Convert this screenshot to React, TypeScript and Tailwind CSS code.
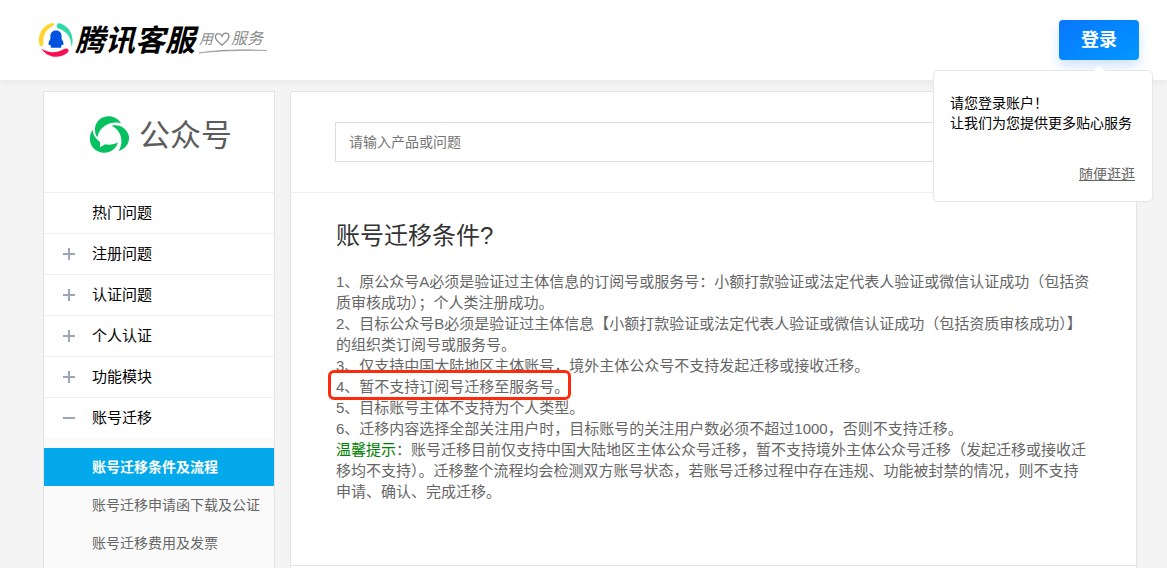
import { useState } from "react";
import clsx from "clsx";

const menu = [
  { label: "热门问题", expandable: false },
  { label: "注册问题", expandable: true },
  { label: "认证问题", expandable: true },
  { label: "个人认证", expandable: true },
  { label: "功能模块", expandable: true },
  { label: "账号迁移", expandable: true },
];

const subMenu = ["账号迁移条件及流程", "账号迁移申请函下载及公证", "账号迁移费用及发票"];

function BrandMark() {
  return (
    <svg viewBox="0 0 36 36" className="h-9 w-9" fill="none">
      <path d="M15.500 1C5.500 2 -1.500 12 1.600 23.500C2.500 24.500 4.500 24 5.500 22.500C4.300 14 8 7.500 14.800 4C16.300 3 16.500 1.500 15.500 1Z" fill="#ffd631" />
      <path d="M19 3.500C19 1.500 20.500 .8 22.500 1.500C32 5 37 15 33.500 25.500C33.500 16 29.500 9.500 20.500 6.500C19 6 18.500 5 19 3.500Z" fill="#2fd9a8" />
      <path d="M3.500 26.500C11 31.500 18 31.500 26 27C28 26 30 26.500 30.500 28C30.800 29 30.300 30 29.500 30.800C21 37.500 8.500 35.500 3.500 26.500Z" fill="#fa0f50" />
      <path d="M18 8.500c-3.800 0-5.600 2.600-5.600 5.800v2.800c-1.300 1.800-2 3.600-1.900 5.200.1 1 .9 1 1.500.1.300.8.600 1.300 1 1.900-.6.500-.6 1.500.4 1.500h9.200c1 0 1-1 .4-1.500.4-.6.700-1.100 1-1.900.6.900 1.400.9 1.500-.1.100-1.600-.6-3.400-1.900-5.200v-2.800c0-3.200-1.800-5.800-5.600-5.800Z" fill="#0053e0" />
    </svg>
  );
}

function Slogan() {
  return (
    <span className="mt-0.5 ml-1 flex flex-col text-[#8c8c8c]">
      <span className="flex items-center text-base leading-5 italic">
        <span className="text-sm leading-5">用</span>
        <svg viewBox="0 0 16 16" className="h-[18px] w-[18px]" fill="none" stroke="currentColor" strokeWidth="1.2">
          <path d="M8 13.500C5.500 11.500 1.500 9 2.200 5.500C2.900 2.500 6.500 2.300 8 5.500C9.500 2 13.500 2 14.200 5C14.800 8.500 10.500 11 8 13.500Z" />
        </svg>
        服务
      </span>
      <svg viewBox="0 0 68 5" className="h-[5px] w-[68px]">
        <path d="M0 4C20 .5 44 .3 68 1.500C44 1 20 1.800 0 4Z" fill="currentColor" stroke="currentColor" strokeWidth=".5" />
      </svg>
    </span>
  );
}

function OfficialAccountMark() {
  return (
    <svg viewBox="0 0 117 111" className="h-[37px] w-[39px]" fill="#07c160">
      <path d="M22 64C10 48 13 23 29 10C47-5 77-3 93 21C66 15 30 25 22 64Z" />
      <path d="M65 29C87 23 110 36 116 58C121 79 107 99 86 105C101 80 97 45 65 29Z" />
      <path d="M8 41C9 56 17 67 30 78L30 94L46 85C62 88 74 84 84 79C79 99 60 112 39 110C13 107-3 86 0 62C1 54 4 47 8 41Z" />
    </svg>
  );
}

function LoginPopover() {
  return (
    <div className="absolute top-[50px] -right-3.5 z-10 w-[220px] rounded-[5px] border border-[#e6e6e6] bg-white px-4 pt-[22px] pb-[17px] text-sm leading-5">
      <svg viewBox="0 0 12 6" className="absolute -top-1.5 left-[159px] h-[7px] w-3" fill="#fff">
        <path d="M0 6L6 0L12 6Z" />
      </svg>
      <p className="whitespace-nowrap">
        请您登录账户！
        <br />
        让我们为您提供更多贴心服务
      </p>
      <div className="mt-[31px] pr-px text-right">
        <a href="#" className="text-[#666] underline">
          随便逛逛
        </a>
      </div>
    </div>
  );
}

function Header() {
  return (
    <header className="relative z-10 flex h-20 items-center justify-between bg-white pr-7 pl-[38px] shadow-[0_2px_8px_rgba(0,0,0,0.06)]">
      <a href="#" className="flex items-center">
        <BrandMark />
        <span className="ml-px pt-0.5 text-3xl leading-9 font-bold italic text-black">腾讯客服</span>
        <Slogan />
      </a>
      <div className="relative">
        <button className="block h-10 w-20 rounded bg-linear-to-br from-[#0a76ff] to-[#0597ff] text-lg font-bold text-white shadow-[0_6px_12px_rgba(20,110,255,0.2)]">
          登录
        </button>
        <LoginPopover />
      </div>
    </header>
  );
}

function Sidebar() {
  const [active, setActive] = useState(subMenu[0]);
  const [open, setOpen] = useState("账号迁移");

  return (
    <aside className="flex w-[232px] shrink-0 flex-col border border-b-0 border-[#e3e3e3] bg-white">
      <div className="flex h-[101px] items-start border-b border-[#f0f0f0] pt-6 pl-[46px]">
        <OfficialAccountMark />
        <span className="ml-2.5 pt-0.5 text-[31px] leading-9 text-[#5c5c5c]">公众号</span>
      </div>
      <nav className="flex flex-1 flex-col">
        {menu.map((item) => (
          <button
            key={item.label}
            onClick={() => setOpen(item.label)}
            className="flex h-[41px] w-full items-center border-b border-[#f0f0f0] pl-[19px] text-left text-[15px] text-black last-of-type:border-[#fafafa]"
          >
            <span className="w-[29px]">
              {item.expandable && (
                <svg viewBox="0 0 12 12" className="h-3 w-3" stroke="#9aa5b8" strokeWidth="2">
                  <path d={open === item.label ? "M0 6H12" : "M0 6H12M6 0V12"} />
                </svg>
              )}
            </span>
            {item.label}
          </button>
        ))}
        {open === "账号迁移" && (
          <ul className="flex-1 bg-[#fafafa] pt-[9px]">
            {subMenu.map((label) => (
              <li key={label}>
                <a
                  href="#"
                  onClick={() => setActive(label)}
                  className={clsx(
                    "block h-[38px] pl-12 text-sm leading-[38px] whitespace-nowrap",
                    active === label ? "bg-[#03a9ea] font-bold text-white" : "text-[#666]"
                  )}
                >
                  {label}
                </a>
              </li>
            ))}
          </ul>
        )}
      </nav>
    </aside>
  );
}

function Article() {
  return (
    <article className="border-b border-[#e8e8e8] px-[45px] pt-[26px] pb-[63px]">
      <h1 className="text-2xl leading-[34px] text-[#333]">账号迁移条件?</h1>
      <div className="mt-[18px] text-[15px] leading-[21px] text-[#666]">
        <p>
          1、原公众号A必须是验证过主体信息的订阅号或服务号：小额打款验证或法定代表人验证或微信认证成功（包括资质审核成功）；个人类注册成功。
        </p>
        <p>
          2、目标公众号B必须是验证过主体信息【小额打款验证或法定代表人验证或微信认证成功（包括资质审核成功）】的组织类订阅号或服务号。
        </p>
        <p>3、仅支持中国大陆地区主体账号，境外主体公众号不支持发起迁移或接收迁移。</p>
        <p className="relative">
          4、暂不支持订阅号迁移至服务号。
          <span className="absolute -top-1.5 -left-2 h-[30px] w-[243px] rounded-md border-3 border-[#fb2b0b]" />
        </p>
        <p>5、目标账号主体不支持为个人类型。</p>
        <p>6、迁移内容选择全部关注用户时，目标账号的关注用户数必须不超过1000，否则不支持迁移。</p>
        <p>
          <span className="text-[#008000]">温馨提示</span>
          ：账号迁移目前仅支持中国大陆地区主体公众号迁移，暂不支持境外主体公众号迁移（发起迁移或接收迁移均不支持）。迁移整个流程均会检测双方账号状态，若账号迁移过程中存在违规、功能被封禁的情况，则不支持申请、确认、完成迁移。
        </p>
      </div>
    </article>
  );
}

export default function App() {
  return (
    <div
      lang="zh-CN"
      className="flex min-h-screen flex-col bg-[#f4f4f4] font-['Liberation_Sans','Noto_Sans_CJK_SC',sans-serif] text-black"
    >
      <Header />
      <div className="flex flex-1 gap-[15px] pt-[11px] pr-[30px] pl-[43px]">
        <Sidebar />
        <main className="min-w-0 flex-1 rounded-t-sm border border-b-0 border-[#e3e3e3] bg-white">
          <div className="h-[101px] border-b border-[#f0f0f0] px-11 pt-[30px]">
            <input
              type="text"
              aria-label="搜索"
              placeholder="请输入产品或问题"
              className="h-10 w-full border border-[#dcdcdc] bg-white px-[13px] text-sm placeholder:text-[#757575] focus:outline-none"
            />
          </div>
          <Article />
        </main>
      </div>
    </div>
  );
}
